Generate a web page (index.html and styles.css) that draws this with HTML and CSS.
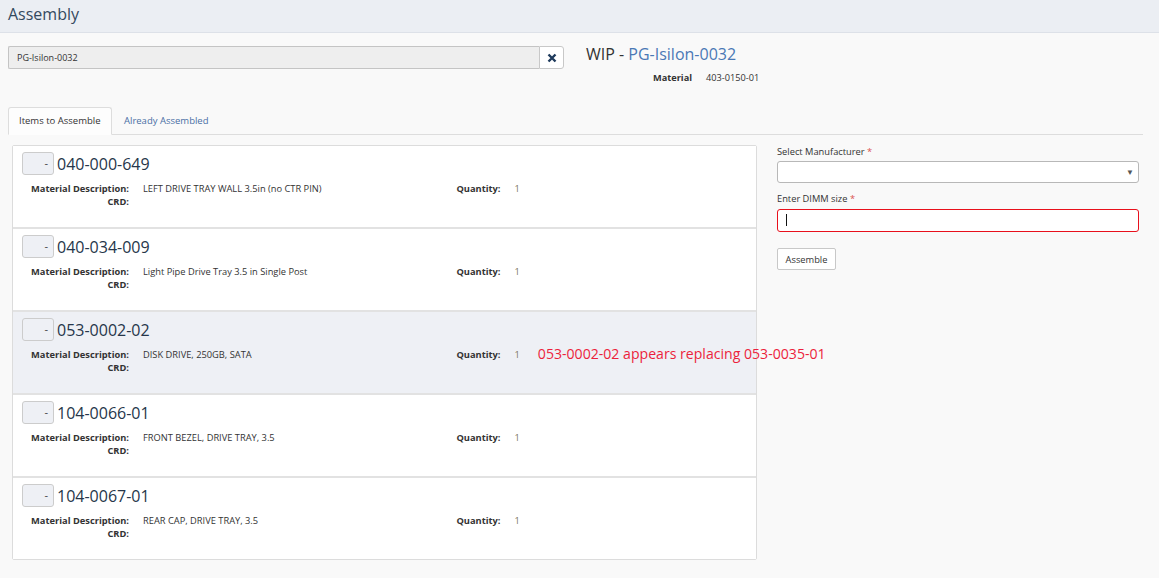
FILE: index.html
```html
<!DOCTYPE html>
<html>
<head>
<meta charset="utf-8">
<title>Assembly</title>
<link rel="stylesheet" href="styles.css">
</head>
<body>
<header class="page-header"><h1 class="page-title">Assembly</h1></header>
<main class="page">
  <section class="top">
    <div class="search">
      <div class="search-input">PG-Isilon-0032</div>
      <button class="search-clear" type="button">
        <svg width="10" height="10" viewBox="0 0 10 10"><path d="M1.5 1.5 L8.5 8.5 M8.5 1.5 L1.5 8.5" stroke="#1e3a5c" stroke-width="2.4" stroke-linecap="butt"/></svg>
      </button>
    </div>
    <div class="wip">
      <div class="wip-title">WIP - <span class="wip-id">PG-Isilon-0032</span></div>
      <div class="wip-meta"><span class="wip-label">Material</span><span class="wip-value">403-0150-01</span></div>
    </div>
  </section>

  <nav class="tabs">
    <div class="tab active">Items to Assemble</div>
    <div class="tab">Already Assembled</div>
  </nav>

  <section class="content">
    <div class="items">
      <div class="item">
        <div class="item-head"><span class="toggle">-</span><span class="part">040-000-649</span></div>
        <div class="details">
          <div class="col"><div class="row"><span class="lbl">Material Description:</span><span class="val">LEFT DRIVE TRAY WALL 3.5in (no CTR PIN)</span></div><div class="row"><span class="lbl">CRD:</span><span class="val"></span></div></div>
          <div class="col"><div class="row"><span class="lbl">Quantity:</span><span class="val qty">1</span></div></div>
        </div>
      </div>
      <div class="item">
        <div class="item-head"><span class="toggle">-</span><span class="part">040-034-009</span></div>
        <div class="details">
          <div class="col"><div class="row"><span class="lbl">Material Description:</span><span class="val">Light Pipe Drive Tray 3.5 in Single Post</span></div><div class="row"><span class="lbl">CRD:</span><span class="val"></span></div></div>
          <div class="col"><div class="row"><span class="lbl">Quantity:</span><span class="val qty">1</span></div></div>
        </div>
      </div>
      <div class="item highlight">
        <div class="item-head"><span class="toggle">-</span><span class="part">053-0002-02</span></div>
        <div class="details">
          <div class="col"><div class="row"><span class="lbl">Material Description:</span><span class="val">DISK DRIVE, 250GB, SATA</span></div><div class="row"><span class="lbl">CRD:</span><span class="val"></span></div></div>
          <div class="col"><div class="row"><span class="lbl">Quantity:</span><span class="val qty">1</span><span class="replace">053-0002-02 appears replacing 053-0035-01</span></div></div>
        </div>
      </div>
      <div class="item">
        <div class="item-head"><span class="toggle">-</span><span class="part">104-0066-01</span></div>
        <div class="details">
          <div class="col"><div class="row"><span class="lbl">Material Description:</span><span class="val">FRONT BEZEL, DRIVE TRAY, 3.5</span></div><div class="row"><span class="lbl">CRD:</span><span class="val"></span></div></div>
          <div class="col"><div class="row"><span class="lbl">Quantity:</span><span class="val qty">1</span></div></div>
        </div>
      </div>
      <div class="item">
        <div class="item-head"><span class="toggle">-</span><span class="part">104-0067-01</span></div>
        <div class="details">
          <div class="col"><div class="row"><span class="lbl">Material Description:</span><span class="val">REAR CAP, DRIVE TRAY, 3.5</span></div><div class="row"><span class="lbl">CRD:</span><span class="val"></span></div></div>
          <div class="col"><div class="row"><span class="lbl">Quantity:</span><span class="val qty">1</span></div></div>
        </div>
      </div>
    </div>

    <form class="form">
      <label class="field-label first">Select Manufacturer <span class="req">*</span></label>
      <div class="select"><span class="caret">&#9660;</span></div>
      <label class="field-label">Enter DIMM size <span class="req">*</span></label>
      <div class="text-input"><span class="cursor"></span></div>
      <button class="btn" type="button">Assemble</button>
    </form>
  </section>
</main>
</body>
</html>
```

FILE: styles.css
```css
* { box-sizing: border-box; }
html, body { margin: 0; padding: 0; }
body {
  background: #f9f9f9;
  font-family: "Open Sans", "Liberation Sans", sans-serif;
  color: #333;
  width: 1159px;
  height: 578px;
  overflow: hidden;
}
.page-header {
  height: 33px;
  background: #ebeef3;
  border-bottom: 1px solid #dde1e8;
  padding: 0 8px;
}
.page-title {
  margin: 0;
  font-size: 16px;
  font-weight: 400;
  line-height: 29px;
  color: #34495e;
}
.page { padding: 13px 16px 0 8px; }

.top { display: flex; gap: 22px; height: 61px; }
.search { display: flex; width: 556px; height: 23px; }
.search-input {
  flex: 1;
  height: 23px;
  background: #eeeeee;
  border: 1px solid #c4c4c4;
  border-right: none;
  border-radius: 2px 0 0 2px;
  font-size: 9px;
  line-height: 21px;
  padding-left: 8px;
  color: #333;
}
.search-clear {
  width: 25px;
  height: 23px;
  background: #fff;
  border: 1px solid #c8c8c8;
  border-radius: 0 3px 3px 0;
  padding: 0;
  display: flex;
  align-items: center;
  justify-content: center;
}
.wip-title {
  font-size: 16px;
  line-height: 18px;
  margin-top: -1px;
  color: #333;
}
.wip-id { color: #4a78b5; }
.wip-meta { display: flex; margin-top: 9px; font-size: 9.2px; line-height: 12px; }
.wip-label { width: 106px; text-align: right; font-weight: 700; color: #333; }
.wip-value { margin-left: 14px; color: #333; }

.tabs {
  display: flex;
  height: 28px;
  border-bottom: 1px solid #dddddd;
  width: 1135px;
}
.tab {
  font-size: 9.5px;
  line-height: 26px;
  padding: 0 11px;
  color: #4a6fa5;
  border: 1px solid transparent;
  border-radius: 3px 3px 0 0;
}
.tab.active {
  background: #fdfdfd;
  border-color: #dddddd;
  border-bottom-color: #fdfdfd;
  color: #333;
  height: 28px;
  width: 104px;
  padding: 0 10px;
}

.content {
  display: flex;
  gap: 20px;
  padding: 10px 4px 0 4px;
  width: 1135px;
}
.items {
  width: 745px;
  border: 1px solid #dcdcdc;
  border-radius: 2px;
  background: #fff;
}
.item {
  height: 83px;
  padding: 6px 0 0 0;
  border-bottom: 2px solid #e2e2e2;
  background: #fff;
}
.item:last-child { border-bottom: none; height: 81px; }
.item.highlight { background: #eef0f5; }
.item-head { display: flex; align-items: center; height: 22px; padding-left: 9px; }
.toggle {
  width: 32px;
  height: 23px;
  background: #eef0f5;
  border: 1px solid #cccccc;
  border-radius: 3px;
  font-size: 11px;
  line-height: 20px;
  text-align: right;
  padding-right: 5px;
  color: #444;
}
.part {
  font-size: 16px;
  margin-left: 3px;
  margin-top: 2px;
  color: #26364a;
  line-height: 24px;
}
.details { display: flex; margin-top: 8px; }
.col { width: 50%; }
.row { display: flex; height: 13px; font-size: 9.3px; line-height: 13px; }
.lbl { width: 116px; text-align: right; font-weight: 700; color: #333; flex: none; }
.val { margin-left: 14px; color: #333; white-space: nowrap; }
.qty { color: #7d7660; }
.replace {
  margin-left: 18px;
  font-size: 14.1px;
  line-height: 11px;
  color: #ec1f3c;
  white-space: nowrap;
}

.form { width: 362px; display: flex; flex-direction: column; align-items: flex-start; }
.field-label { font-size: 9.3px; line-height: 12px; color: #333; }
.field-label.first { margin-top: 1px; }
.req { color: #d9534f; }
.select {
  width: 362px;
  height: 22px;
  margin-top: 3px;
  margin-bottom: 10px;
  background: #fff;
  border: 1px solid #b8b8b8;
  border-radius: 3px;
  position: relative;
}
.caret {
  position: absolute;
  right: 4px;
  top: 5px;
  font-size: 8px;
  line-height: 10px;
  color: #555;
}
.text-input {
  width: 362px;
  height: 23px;
  margin-top: 4px;
  background: #fff;
  border: 1.5px solid #e8101c;
  border-radius: 3px;
  padding: 4px 0 0 8px;
}
.cursor { display: block; width: 1px; height: 12px; background: #111; }
.btn {
  margin-top: 16px;
  height: 22px;
  width: 59px;
  padding: 0;
  background: #fff;
  border: 1px solid #c8c8c8;
  border-radius: 2px;
  font-family: "Open Sans", "Liberation Sans", sans-serif;
  font-size: 9.3px;
  color: #333;
}
```
